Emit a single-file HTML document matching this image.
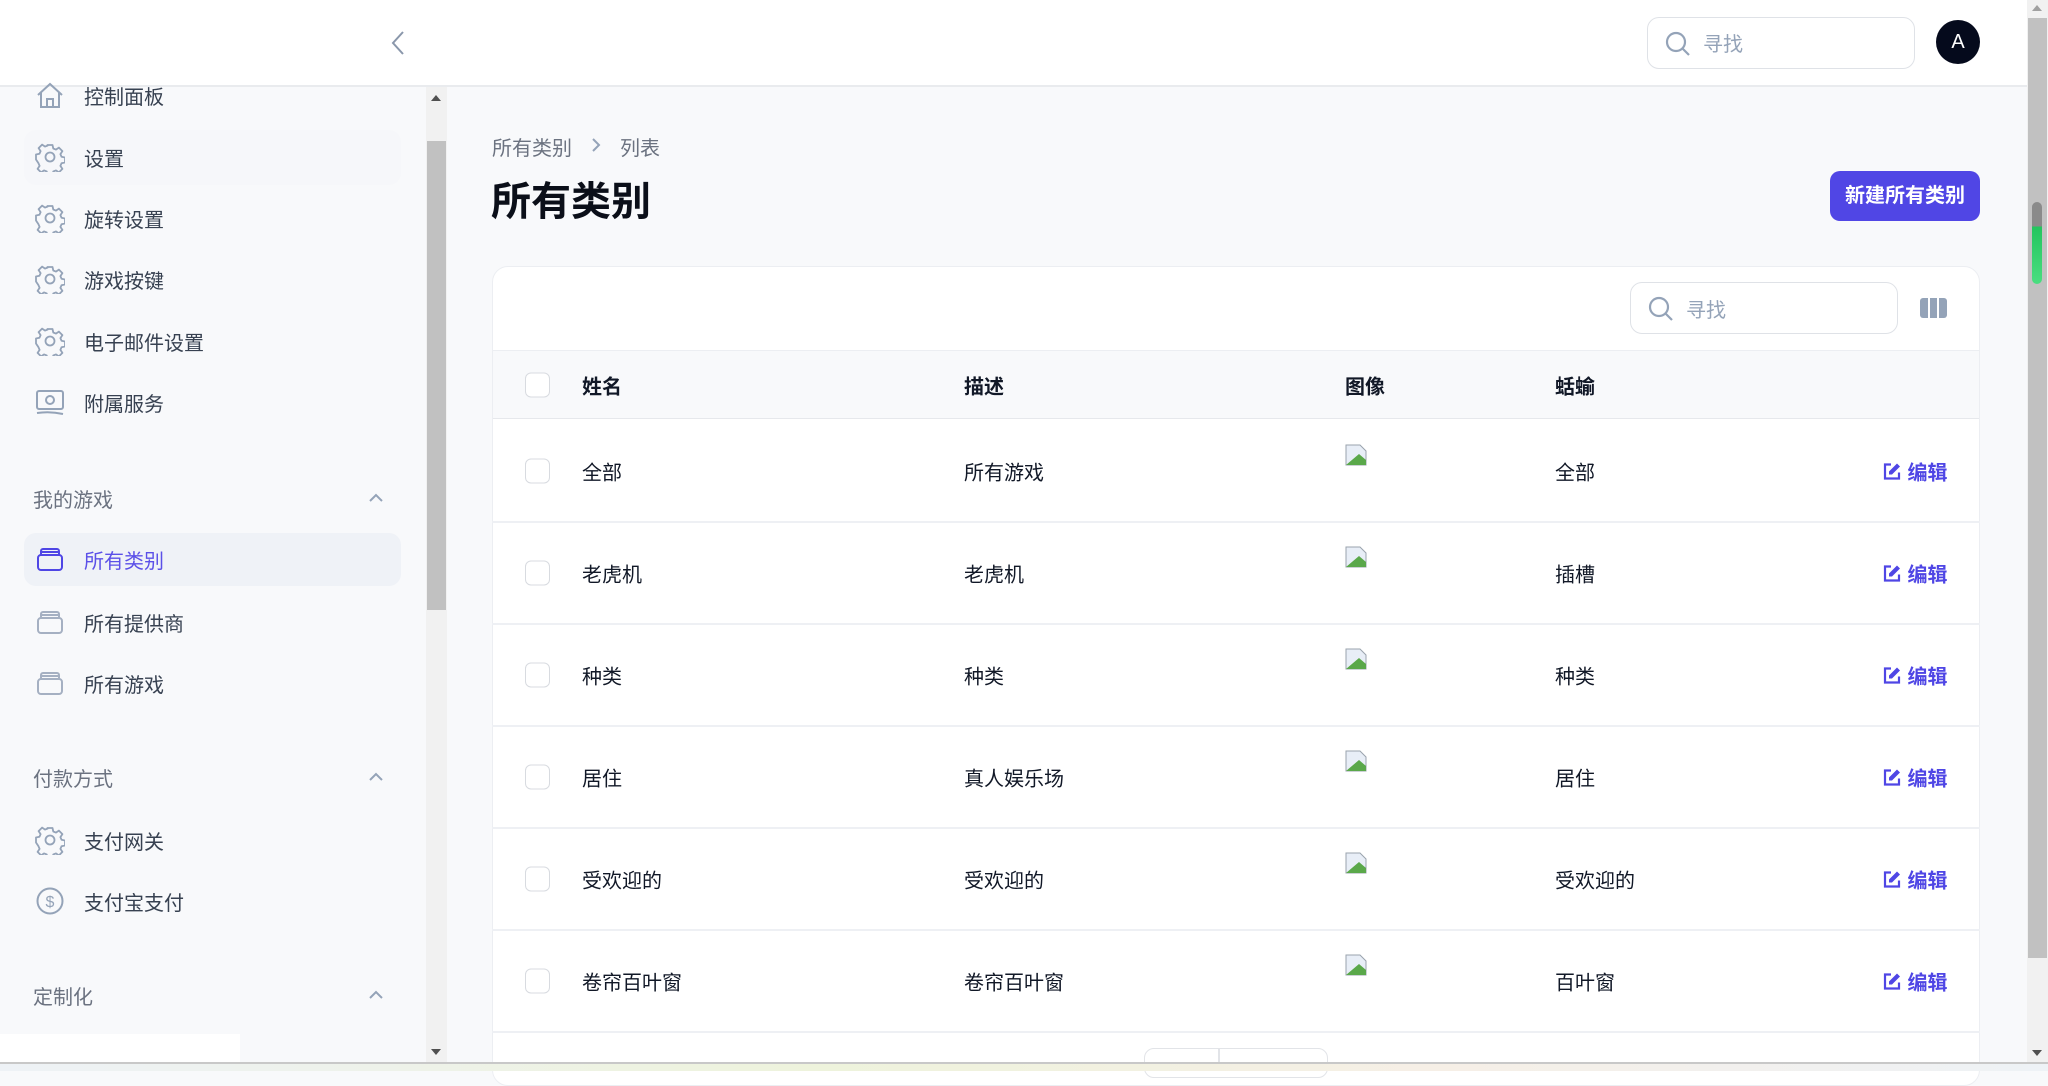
<!DOCTYPE html>
<html><head><meta charset="utf-8">
<style>
*{box-sizing:border-box;margin:0;padding:0}
body{width:2048px;height:1071px;overflow:hidden;background:#f8f9fb;font-family:"Liberation Sans","Noto Sans CJK SC",sans-serif;position:relative;color:#1f2328}
.a{position:absolute}
.side{left:0;top:87px;width:426px;height:977px;background:#f8f9fb}
.item{position:absolute;left:33px;font-size:20px;color:#374151;display:flex;align-items:center;height:30px}
.item svg{width:30px;height:30px;margin-right:19px;margin-left:2px}
.sec{position:absolute;left:33px;font-size:20px;color:#6b7280}
.chev{position:absolute;left:368px;width:16px;height:16px}
.t{position:absolute;font-size:20px;color:#111827;transform:translateY(-50%)}
.cb{position:absolute;left:525px;width:25px;height:25px;border:1.5px solid #d8dbe0;border-radius:6px;background:#fff;transform:translateY(-50%)}
.edit{position:absolute;left:1882px;font-size:20px;color:#4f46e5;font-weight:bold;transform:translateY(-50%);display:flex;align-items:center}
.line{position:absolute;left:492px;width:1488px;height:2px;background:#eef0f4}
.img{position:absolute;left:1345px;width:22px;height:22px}
</style></head><body>
<div class="a" style="left:0;top:0;width:2027px;height:87px;background:#fff;border-bottom:2px solid #e9ebee"></div>
<svg class="a" style="left:388px;top:30px" width="20" height="26" viewBox="0 0 20 26"><path d="M15 2 L5 13 L15 24" fill="none" stroke="#8a97ab" stroke-width="2"/></svg>
<div class="a" style="left:1647px;top:17px;width:268px;height:52px;border:1.5px solid #dfe2e7;border-radius:12px;background:#fff"></div>
<svg class="a" style="left:1664px;top:30px" width="28" height="28" viewBox="0 0 28 28"><circle cx="12" cy="12" r="9" fill="none" stroke="#94a3b8" stroke-width="2.2"/><path d="M18.5 18.5 L25 25" stroke="#94a3b8" stroke-width="2.2"/></svg>
<div class="a" style="left:1703px;top:28px;font-size:20px;color:#94a3b8">寻找</div>
<div class="a" style="left:1936px;top:20px;width:44px;height:44px;border-radius:50%;background:#050a1c;color:#fff;font-size:20px;text-align:center;line-height:44px">A</div>
<div class="a side"></div>
<div class="item" style="top:80px"><svg viewBox="0 0 30 30"><path d="M3 15 L15 4 L27 15 M6 12 V27 H24 V12 M12 27 V19 H18 V27" fill="none" stroke="#94a3b8" stroke-width="2"/></svg>控制面板</div>
<div class="a" style="left:24px;top:130px;width:377px;height:55px;border-radius:12px;background:#f6f7fa"></div>
<svg width="0" height="0" style="position:absolute"><defs><symbol id="g" viewBox="0 0 30 30"><path d="M12.5 3h5l.8 3.5 2.6 1.1 3-2 3.5 3.5-2 3 1.1 2.6 3.5.8v5l-3.5.8-1.1 2.6 2 3-3.5 3.5-3-2-2.6 1.1-.8 3.5h-5l-.8-3.5-2.6-1.1-3 2-3.5-3.5 2-3-1.1-2.6L1 17.5v-5l3.5-.8 1.1-2.6-2-3L7.1 2.6l3 2 2.6-1.1z" fill="none" stroke="#94a3b8" stroke-width="1.8" stroke-linejoin="round"/><circle cx="15" cy="15" r="4.5" fill="none" stroke="#94a3b8" stroke-width="1.8"/></symbol>
<symbol id="s" viewBox="0 0 30 30"><rect x="3" y="11" width="24" height="15" rx="3" fill="none" stroke="currentColor" stroke-width="2"/><path d="M6 11 V7 a2 2 0 0 1 2-2 h14 a2 2 0 0 1 2 2 V11 M6 8 H24" fill="none" stroke="currentColor" stroke-width="2"/></symbol></defs></svg>
<div class="item" style="top:142px"><svg><use href="#g"/></svg>设置</div>
<div class="item" style="top:203px"><svg><use href="#g"/></svg>旋转设置</div>
<div class="item" style="top:264px"><svg><use href="#g"/></svg>游戏按键</div>
<div class="item" style="top:326px"><svg><use href="#g"/></svg>电子邮件设置</div>
<div class="item" style="top:387px"><svg viewBox="0 0 30 30"><rect x="2" y="4" width="26" height="18" rx="2" fill="none" stroke="#94a3b8" stroke-width="2"/><circle cx="15" cy="13" r="4" fill="none" stroke="#94a3b8" stroke-width="2"/><path d="M2 26 Q15 24 28 27" fill="none" stroke="#94a3b8" stroke-width="2"/></svg>附属服务</div>
<div class="sec" style="top:484px">我的游戏</div>
<svg class="chev" style="top:490px" viewBox="0 0 16 16"><path d="M2 11 L8 5 L14 11" fill="none" stroke="#94a3b8" stroke-width="2"/></svg>
<div class="a" style="left:24px;top:533px;width:377px;height:53px;border-radius:12px;background:#eff2f7"></div>
<div class="item" style="top:544px;color:#5b50e8"><svg style="color:#4f46e5"><use href="#s"/></svg>所有类别</div>
<div class="item" style="top:607px"><svg style="color:#a5b0c2"><use href="#s"/></svg>所有提供商</div>
<div class="item" style="top:668px"><svg style="color:#a5b0c2"><use href="#s"/></svg>所有游戏</div>
<div class="sec" style="top:763px">付款方式</div>
<svg class="chev" style="top:769px" viewBox="0 0 16 16"><path d="M2 11 L8 5 L14 11" fill="none" stroke="#94a3b8" stroke-width="2"/></svg>
<div class="item" style="top:825px"><svg><use href="#g"/></svg>支付网关</div>
<div class="item" style="top:886px"><svg viewBox="0 0 30 30"><circle cx="15" cy="15" r="12.5" fill="none" stroke="#94a3b8" stroke-width="2"/><text x="15" y="21" text-anchor="middle" font-size="16" fill="#94a3b8" font-family="Liberation Sans">$</text></svg>支付宝支付</div>
<div class="sec" style="top:981px">定制化</div>
<svg class="chev" style="top:987px" viewBox="0 0 16 16"><path d="M2 11 L8 5 L14 11" fill="none" stroke="#94a3b8" stroke-width="2"/></svg>
<div class="a" style="left:0;top:1034px;width:240px;height:30px;background:#fff"></div>
<div class="a" style="left:426px;top:87px;width:21px;height:977px;background:#f1f1f1"></div>
<div class="a" style="left:427px;top:141px;width:19px;height:469px;background:#c1c1c1"></div>
<div class="a" style="left:431px;top:95px;width:0;height:0;border-left:5px solid transparent;border-right:5px solid transparent;border-bottom:6px solid #505050"></div>
<div class="a" style="left:431px;top:1049px;width:0;height:0;border-left:5px solid transparent;border-right:5px solid transparent;border-top:6px solid #505050"></div>
<div class="a" style="left:492px;top:132px;font-size:20px;color:#6b7280">所有类别</div>
<svg class="a" style="left:590px;top:136px" width="12" height="18" viewBox="0 0 12 18"><path d="M3 3 L9 9 L3 15" fill="none" stroke="#94a3b8" stroke-width="2"/></svg>
<div class="a" style="left:620px;top:132px;font-size:20px;color:#6b7280">列表</div>
<div class="a" style="left:491px;top:169px;font-size:40px;font-weight:bold;color:#0b0f19">所有类别</div>
<div class="a" style="left:1830px;top:171px;width:150px;height:50px;border-radius:10px;background:#5046e5;color:#fff;font-size:20px;font-weight:bold;text-align:center;line-height:50px">新建所有类别</div>
<div class="a" style="left:492px;top:266px;width:1488px;height:820px;background:#fff;border:1.5px solid #eceef2;border-radius:16px"></div>
<div class="a" style="left:1630px;top:282px;width:268px;height:52px;border:1.5px solid #dfe2e7;border-radius:12px;background:#fff"></div>
<svg class="a" style="left:1647px;top:295px" width="28" height="28" viewBox="0 0 28 28"><circle cx="12" cy="12" r="9" fill="none" stroke="#94a3b8" stroke-width="2.2"/><path d="M18.5 18.5 L25 25" stroke="#94a3b8" stroke-width="2.2"/></svg>
<div class="a" style="left:1686px;top:294px;font-size:20px;color:#94a3b8">寻找</div>
<div class="a" style="left:1920px;top:298px;width:27px;height:20px;display:flex;gap:2px"><div style="flex:1;background:#94a3b8;border-radius:3px 0 0 3px"></div><div style="flex:1;background:#94a3b8"></div><div style="flex:1;background:#94a3b8;border-radius:0 3px 3px 0"></div></div>
<div class="a" style="left:493px;top:350px;width:1486px;height:69px;background:#f8f9fb;border-top:1.5px solid #eceef2;border-bottom:1.5px solid #e6e8ec"></div>
<div class="cb" style="top:385px"></div>
<div class="t" style="left:582px;top:385px;font-weight:bold">姓名</div>
<div class="t" style="left:964px;top:385px;font-weight:bold">描述</div>
<div class="t" style="left:1345px;top:385px;font-weight:bold">图像</div>
<div class="t" style="left:1555px;top:385px;font-weight:bold">蛞蝓</div>

<div class="cb" style="top:471px"></div><div class="t" style="left:582px;top:471px">全部</div><div class="t" style="left:964px;top:471px">所有游戏</div><svg class="img" style="top:444px" viewBox="0 0 22 22"><path d="M1 1h14l6 6v14H1z" fill="#e8eef7" stroke="#9aa3ad"/><path d="M1 21 L14 10 L21 16 V21z" fill="#5aa84a"/></svg><div class="t" style="left:1555px;top:471px">全部</div><div class="edit" style="top:471px"><svg width="20" height="20" viewBox="0 0 20 20"><path d="M9 3H3v14h14v-6" fill="none" stroke="#4f46e5" stroke-width="2.2"/><path d="M15 2l3 3-8 8H7v-3z" fill="#4f46e5"/></svg>&nbsp;编辑</div>
<div class="line" style="top:521px"></div>
<div class="cb" style="top:573px"></div><div class="t" style="left:582px;top:573px">老虎机</div><div class="t" style="left:964px;top:573px">老虎机</div><svg class="img" style="top:546px" viewBox="0 0 22 22"><path d="M1 1h14l6 6v14H1z" fill="#e8eef7" stroke="#9aa3ad"/><path d="M1 21 L14 10 L21 16 V21z" fill="#5aa84a"/></svg><div class="t" style="left:1555px;top:573px">插槽</div><div class="edit" style="top:573px"><svg width="20" height="20" viewBox="0 0 20 20"><path d="M9 3H3v14h14v-6" fill="none" stroke="#4f46e5" stroke-width="2.2"/><path d="M15 2l3 3-8 8H7v-3z" fill="#4f46e5"/></svg>&nbsp;编辑</div>
<div class="line" style="top:623px"></div>
<div class="cb" style="top:675px"></div><div class="t" style="left:582px;top:675px">种类</div><div class="t" style="left:964px;top:675px">种类</div><svg class="img" style="top:648px" viewBox="0 0 22 22"><path d="M1 1h14l6 6v14H1z" fill="#e8eef7" stroke="#9aa3ad"/><path d="M1 21 L14 10 L21 16 V21z" fill="#5aa84a"/></svg><div class="t" style="left:1555px;top:675px">种类</div><div class="edit" style="top:675px"><svg width="20" height="20" viewBox="0 0 20 20"><path d="M9 3H3v14h14v-6" fill="none" stroke="#4f46e5" stroke-width="2.2"/><path d="M15 2l3 3-8 8H7v-3z" fill="#4f46e5"/></svg>&nbsp;编辑</div>
<div class="line" style="top:725px"></div>
<div class="cb" style="top:777px"></div><div class="t" style="left:582px;top:777px">居住</div><div class="t" style="left:964px;top:777px">真人娱乐场</div><svg class="img" style="top:750px" viewBox="0 0 22 22"><path d="M1 1h14l6 6v14H1z" fill="#e8eef7" stroke="#9aa3ad"/><path d="M1 21 L14 10 L21 16 V21z" fill="#5aa84a"/></svg><div class="t" style="left:1555px;top:777px">居住</div><div class="edit" style="top:777px"><svg width="20" height="20" viewBox="0 0 20 20"><path d="M9 3H3v14h14v-6" fill="none" stroke="#4f46e5" stroke-width="2.2"/><path d="M15 2l3 3-8 8H7v-3z" fill="#4f46e5"/></svg>&nbsp;编辑</div>
<div class="line" style="top:827px"></div>
<div class="cb" style="top:879px"></div><div class="t" style="left:582px;top:879px">受欢迎的</div><div class="t" style="left:964px;top:879px">受欢迎的</div><svg class="img" style="top:852px" viewBox="0 0 22 22"><path d="M1 1h14l6 6v14H1z" fill="#e8eef7" stroke="#9aa3ad"/><path d="M1 21 L14 10 L21 16 V21z" fill="#5aa84a"/></svg><div class="t" style="left:1555px;top:879px">受欢迎的</div><div class="edit" style="top:879px"><svg width="20" height="20" viewBox="0 0 20 20"><path d="M9 3H3v14h14v-6" fill="none" stroke="#4f46e5" stroke-width="2.2"/><path d="M15 2l3 3-8 8H7v-3z" fill="#4f46e5"/></svg>&nbsp;编辑</div>
<div class="line" style="top:929px"></div>
<div class="cb" style="top:981px"></div><div class="t" style="left:582px;top:981px">卷帘百叶窗</div><div class="t" style="left:964px;top:981px">卷帘百叶窗</div><svg class="img" style="top:954px" viewBox="0 0 22 22"><path d="M1 1h14l6 6v14H1z" fill="#e8eef7" stroke="#9aa3ad"/><path d="M1 21 L14 10 L21 16 V21z" fill="#5aa84a"/></svg><div class="t" style="left:1555px;top:981px">百叶窗</div><div class="edit" style="top:981px"><svg width="20" height="20" viewBox="0 0 20 20"><path d="M9 3H3v14h14v-6" fill="none" stroke="#4f46e5" stroke-width="2.2"/><path d="M15 2l3 3-8 8H7v-3z" fill="#4f46e5"/></svg>&nbsp;编辑</div>
<div class="line" style="top:1031px"></div>
<div class="a" style="left:1144px;top:1048px;width:184px;height:30px;border:1.5px solid #e2e4e8;border-radius:10px;background:#fff"></div>
<div class="a" style="left:1218px;top:1049px;width:1.5px;height:20px;background:#e2e4e8"></div>
<div class="a" style="left:0;top:1062px;width:2048px;height:9px;background:linear-gradient(90deg,#eef2f6,#eef3dc 40%,#f6efe6 70%,#eef2f6);border-top:2px solid #c8c8c8"></div>
<div class="a" style="left:2027px;top:0;width:21px;height:1062px;background:#f1f1f1"></div>
<div class="a" style="left:2028px;top:18px;width:19px;height:940px;background:#c1c1c1"></div>
<div class="a" style="left:2032px;top:5px;width:0;height:0;border-left:5px solid transparent;border-right:5px solid transparent;border-bottom:6px solid #a0a0a0"></div>
<div class="a" style="left:2032px;top:1050px;width:0;height:0;border-left:5px solid transparent;border-right:5px solid transparent;border-top:6px solid #505050"></div>
<div class="a" style="left:2032px;top:202px;width:10px;height:82px;border-radius:5px;background:linear-gradient(#8a8a8a 0 30%,#22c55e 30%,#4ade80);"></div>
</body></html>
